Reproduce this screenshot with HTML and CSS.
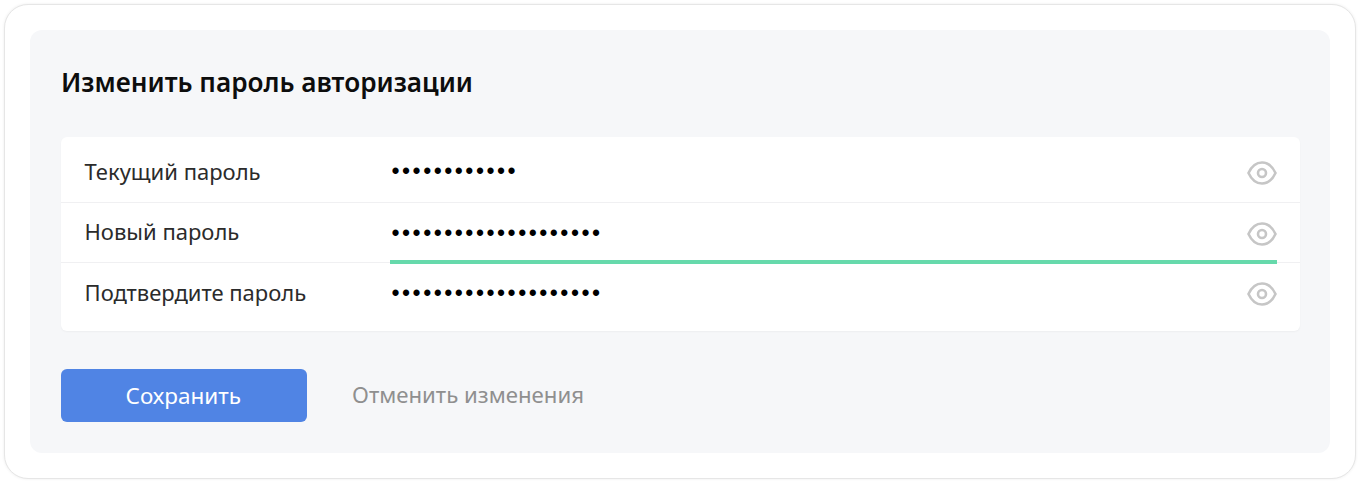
FILE: index.html
```html
<!DOCTYPE html>
<html lang="ru">
<head>
<meta charset="utf-8">
<title>Изменить пароль авторизации</title>
<link rel="stylesheet" href="styles.css">
</head>
<body>
<main class="card">
  <form class="panel">
    <h1 class="title">Изменить пароль авторизации</h1>
    <div class="fields">
      <div class="row row-first">
        <label class="label" for="p1">Текущий пароль</label>
        <input class="input" id="p1" type="password" value="aaaaaaaaaaaa">
        <svg class="eye" viewBox="0 0 30 24" width="30" height="24" fill="none" stroke="#c6c6c6" stroke-width="2.6"><path d="M1.5 12C4.500 5.500 9.500 1.500 15 1.500S25.500 5.500 28.500 12C25.500 18.500 20.500 22.500 15 22.500S4.500 18.500 1.500 12Z"/><circle cx="15" cy="12" r="4"/></svg>
      </div>
      <div class="row row-mid">
        <label class="label" for="p2">Новый пароль</label>
        <input class="input input-active" id="p2" type="password" value="aaaaaaaaaaaaaaaaaaaa">
        <svg class="eye" viewBox="0 0 30 24" width="30" height="24" fill="none" stroke="#c6c6c6" stroke-width="2.6"><path d="M1.5 12C4.500 5.500 9.500 1.500 15 1.500S25.500 5.500 28.500 12C25.500 18.500 20.500 22.500 15 22.500S4.500 18.500 1.500 12Z"/><circle cx="15" cy="12" r="4"/></svg>
      </div>
      <div class="row row-last">
        <label class="label" for="p3">Подтвердите пароль</label>
        <input class="input" id="p3" type="password" value="aaaaaaaaaaaaaaaaaaaa">
        <svg class="eye" viewBox="0 0 30 24" width="30" height="24" fill="none" stroke="#c6c6c6" stroke-width="2.6"><path d="M1.5 12C4.500 5.500 9.500 1.500 15 1.500S25.500 5.500 28.500 12C25.500 18.500 20.500 22.500 15 22.500S4.500 18.500 1.500 12Z"/><circle cx="15" cy="12" r="4"/></svg>
      </div>
    </div>
    <div class="actions">
      <button class="save" type="button">Сохранить</button>
      <a class="cancel" href="#">Отменить изменения</a>
    </div>
  </form>
</main>
</body>
</html>
```

FILE: styles.css
```css
* { box-sizing: border-box; }
html, body { margin: 0; height: 100%; background: #fff; }
body {
  padding: 4px;
  font-family: "Noto Sans", "Open Sans", sans-serif;
  color: #111;
}
.card {
  height: 475px;
  padding: 25px;
  background: #fff;
  border: 1px solid #e6e6e6;
  border-radius: 24px;
  box-shadow: 0 0 3px rgba(0,0,0,.08);
}
.panel {
  height: 423px;
  padding: 29px 30px 0 31px;
  background: #f6f7f9;
  border-radius: 12px;
}
.title {
  margin: 0;
  height: 46px;
  font-size: 26.2px;
  line-height: 46px;
  font-weight: 600;
  color: #0d0d0d;
}
.fields {
  margin-top: 32px;
  height: 194px;
  background: #fff;
  border-radius: 6px;
  box-shadow: 0 1px 2px rgba(0,0,0,.04);
}
.row {
  display: flex;
  align-items: center;
  padding-left: 23.500px;
  padding-right: 23px;
  border-bottom: 1px solid #f0f0f2;
}
.row-first { height: 66px; padding-top: 4px; }
.row-first .label { margin-bottom: 2px; }
.row-first .eye { margin-top: 2px; }
.row-mid { height: 60px; }
.row-mid .label { margin-bottom: 4px; }
.row-mid .eye { margin-top: 3px; }
.row-last { height: 68px; border-bottom: 0; padding-bottom: 8px; }
.row-last .label { margin-bottom: 2px; }
.row-last .eye { margin-top: 2px; }
.label {
  flex: 0 0 305.500px;
  font-size: 22px;
  color: #2b2b2b;
}
.input {
  flex: 1;
  min-width: 0;
  height: 56px;
  border: 0;
  outline: 0;
  padding: 0 0 0 1.500px;
  background: transparent;
  font-family: "Liberation Sans", sans-serif;
  font-size: 23px;
  letter-spacing: 2.5px;
  color: #000;
}
.input-active {
  align-self: flex-start;
  height: 61px;
  padding-top: 3px;
  border-bottom: 4px solid #66d9ab;
}
.eye { flex: 0 0 30px; margin-left: -30px; }
.actions {
  display: flex;
  align-items: center;
  margin-top: 38px;
}
.save {
  width: 245.500px;
  height: 53px;
  border: 0;
  border-radius: 6px;
  background: #5084e4;
  color: #fff;
  font-family: inherit;
  font-size: 22.5px;
  padding: 0 1px 0 0;
}
.cancel {
  margin-left: 45.500px;
  margin-bottom: 2px;
  font-size: 22.200px;
  color: #8f8f8f;
  text-decoration: none;
}
```
